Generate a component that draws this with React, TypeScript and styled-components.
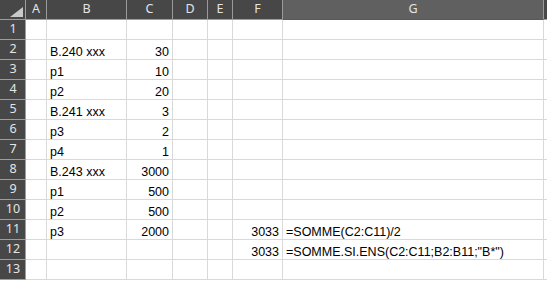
import React from "react";
import styled, { createGlobalStyle } from "styled-components";

const Global = createGlobalStyle`
  html, body { margin: 0; padding: 0; background: #ffffff; }
  body { width: 547px; height: 281px; overflow: hidden; }
`;

const COLS = "26px 21px 80px 46px 35px 25px 50px 261px 1fr";

const Sheet = styled.div`
  display: grid;
  grid-template-columns: ${COLS};
  grid-auto-rows: 20px;
  width: 547px;
  background: #ffffff;
`;

const Corner = styled.div`
  position: relative;
  background: #474747;
  border-right: 1px solid #9e9e9e;
  border-bottom: 1px solid #9e9e9e;
  box-sizing: border-box;
`;

const Triangle = styled.div`
  position: absolute;
  right: 2px;
  bottom: 2px;
  width: 0;
  height: 0;
  border-left: 13px solid transparent;
  border-bottom: 10px solid #c9c9c9;
`;

const ColHead = styled.div<{ $selected?: boolean; $last?: boolean }>`
  box-sizing: border-box;
  display: flex;
  align-items: center;
  justify-content: center;
  background: ${(p) => (p.$selected ? "#606060" : "#474747")};
  border-right: 1px solid ${(p) => (p.$last ? "#474747" : "#9a9a9a")};
  border-bottom: 1px solid ${(p) => (p.$selected ? "#1f7a45" : "#9e9e9e")};
  color: #e4e4e4;
  font-family: "Noto Sans", "Open Sans", sans-serif;
  font-size: 12.5px;
  line-height: 1;
  padding-bottom: 1px;
`;

const RowHead = styled.div`
  box-sizing: border-box;
  display: flex;
  align-items: center;
  justify-content: center;
  background: #474747;
  border-right: 1px solid #9e9e9e;
  border-bottom: 1px solid #9e9e9e;
  color: #e4e4e4;
  font-family: "Noto Sans", "Open Sans", sans-serif;
  font-size: 12.5px;
  line-height: 1;
  padding-left: 1px;
`;

const Cell = styled.div<{ $align?: "left" | "right"; $last?: boolean }>`
  box-sizing: border-box;
  display: flex;
  align-items: flex-end;
  justify-content: ${(p) => (p.$align === "right" ? "flex-end" : "flex-start")};
  border-right: ${(p) => (p.$last ? "none" : "1px solid #d9d9d9")};
  border-bottom: 1px solid #d9d9d9;
  color: #000000;
  font-family: "Liberation Sans", Arial, sans-serif;
  font-size: 12.5px;
  line-height: 14px;
  padding: 0 3px 0 3px;
  white-space: nowrap;
  overflow: visible;
`;

const letters = ["A", "B", "C", "D", "E", "F", "G"];

type RowData = { b?: string; c?: string; f?: string; g?: string };

const rows: RowData[] = [
  {},
  { b: "B.240 xxx", c: "30" },
  { b: "p1", c: "10" },
  { b: "p2", c: "20" },
  { b: "B.241 xxx", c: "3" },
  { b: "p3", c: "2" },
  { b: "p4", c: "1" },
  { b: "B.243 xxx", c: "3000" },
  { b: "p1", c: "500" },
  { b: "p2", c: "500" },
  { b: "p3", c: "2000", f: "3033", g: "=SOMME(C2:C11)/2" },
  { f: "3033", g: '=SOMME.SI.ENS(C2:C11;B2:B11;"B*")' },
  {},
];

export default function App() {
  return (
    <>
      <Global />
      <Sheet>
        <Corner>
          <Triangle />
        </Corner>
        {letters.map((l) => (
          <ColHead key={l} $selected={l === "G"}>
            {l}
          </ColHead>
        ))}
        <ColHead $last />
        {rows.map((r, i) => (
          <React.Fragment key={i}>
            <RowHead>{i + 1}</RowHead>
            <Cell />
            <Cell>{r.b}</Cell>
            <Cell $align="right">{r.c}</Cell>
            <Cell />
            <Cell />
            <Cell $align="right">{r.f}</Cell>
            <Cell>{r.g}</Cell>
            <Cell $last />
          </React.Fragment>
        ))}
      </Sheet>
    </>
  );
}
